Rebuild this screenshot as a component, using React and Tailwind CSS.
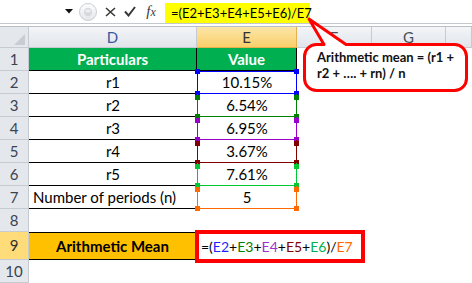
import React from 'react';

const rows = [
  { n: 2, label: 'r1', value: '10.15%', box: 'border-[#0000ff] border-t', handle: 'bg-[#0000ff]', first: true },
  { n: 3, label: 'r2', value: '6.54%', box: 'border-[#008000]', handle: 'bg-[#008000]' },
  { n: 4, label: 'r3', value: '6.95%', box: 'border-[#9900cc]', handle: 'bg-[#9900cc]' },
  { n: 5, label: 'r4', value: '3.67%', box: 'border-[#800000]', handle: 'bg-[#800000]' },
  { n: 6, label: 'r5', value: '7.61%', box: 'border-[#00c832]', handle: 'bg-[#00c832]' },
  { n: 7, label: 'Number of periods (n)', value: '5', box: 'border-[#ff6a00]', handle: 'bg-[#ff6a00]', left: true },
];

function RowHead({ n, active }) {
  return (
    <div
      className={`flex items-center justify-center border-b border-r border-[#c6cbd2] text-[15px] ${
        active ? 'bg-[#ffdc7a] text-[#2f2f2f]' : 'bg-[#e4e8ed] text-[#3b4252]'
      }`}
    >
      {n}
    </div>
  );
}

function ColHead({ label, active, blue }) {
  return (
    <div
      className={`flex items-center justify-center border-b border-r text-[15px] ${
        active
          ? 'bg-gradient-to-b from-[#fde6a6] to-[#f8cf6a] border-[#e2b24c] text-[#333]'
          : 'bg-gradient-to-b from-[#f3f5f8] to-[#e1e5ea] border-[#c6cbd2]'
      } ${blue ? 'text-[#3559a0]' : active ? '' : 'text-[#4a4f58]'}`}
    >
      {label}
    </div>
  );
}

function Formula() {
  return (
    <>
      <span>=(</span>
      <span className="text-[#1f1fff]">E2</span>+
      <span className="text-[#008000]">E3</span>+
      <span className="text-[#9933cc]">E4</span>+
      <span className="text-[#800000]">E5</span>+
      <span className="text-[#00b050]">E6</span>)/
      <span className="text-[#ff6a00]">E7</span>
    </>
  );
}

export default function App() {
  return (
    <div className="relative w-[472px] h-[283px] overflow-hidden bg-white font-[Lato,sans-serif] text-black">
      {/* formula bar */}
      <div className="flex h-[23px] bg-white">
        <div className="w-[78px] flex items-center justify-end pr-[5px]">
          <svg width="8" height="5" viewBox="0 0 8 5">
            <path d="M0 0 H8 L4 4.5 Z" fill="#111" />
          </svg>
        </div>
        <div className="w-[20px] flex items-center">
          <svg width="20" height="23" viewBox="0 0 20 23">
            <defs>
              <linearGradient id="g1" x1="0" y1="0" x2="0" y2="1">
                <stop offset="0" stopColor="#ffffff" />
                <stop offset="1" stopColor="#e3e6ea" />
              </linearGradient>
            </defs>
            <circle cx="10" cy="12" r="8.5" fill="url(#g1)" stroke="#c9cdd3" />
            <circle cx="10" cy="12" r="4.2" fill="#d5d8dd" />
            <ellipse cx="10" cy="10.8" rx="3" ry="1.6" fill="#eceef1" />
          </svg>
        </div>
        <div className="w-[2px]" />
        <div className="w-[20px] flex items-center justify-center">
          <svg width="11" height="10" viewBox="0 0 11 10">
            <path d="M1 1 L10 9 M10 1 L1 9" stroke="#3a3a3a" strokeWidth="1.6" />
          </svg>
        </div>
        <div className="w-[20px] flex items-center justify-center">
          <svg width="12" height="11" viewBox="0 0 12 11">
            <path d="M1 5.5 L4.5 9.5 L11 1" stroke="#3a3a3a" strokeWidth="2" fill="none" />
          </svg>
        </div>
        <div className="w-[22px] flex items-center justify-center font-['Liberation_Serif',serif] italic text-[15px] text-[#3a3a3a] leading-none">
          f<span className="text-[12px]">x</span>
        </div>
        <div className="flex-1 pl-[3px]">
          <div className="mt-[3px] h-[20px] w-[145px] bg-[#ffff00] pl-[6px] text-[13px] leading-[20px] whitespace-nowrap">
            =(E2+E3+E4+E5+E6)/E7
          </div>
        </div>
      </div>
      <div className="h-px bg-[#c3c8cf]" />
      <div className="h-[2px] bg-white" />
      <div className="h-px bg-[#b9bfc7]" />

      {/* sheet */}
      <div className="grid grid-cols-[29px_168px_100px_75px_74px_1fr] grid-rows-[21px_repeat(8,23px)_28px_23px]">
        <div className="relative bg-[#e4e8ed] border-b border-r border-[#c6cbd2]">
          <svg className="absolute right-[3px] bottom-[2px]" width="11" height="11" viewBox="0 0 11 11">
            <path d="M11 0 V11 H0 Z" fill="#c9cdd3" />
          </svg>
        </div>
        <ColHead label="D" blue />
        <ColHead label="E" active />
        <ColHead label="F" />
        <ColHead label="G" />
        <ColHead label="" />

        <RowHead n={1} />
        <div className="flex items-center justify-center bg-[#00b050] border-b border-r border-black text-white font-bold text-[15px]">
          Particulars
        </div>
        <div className="flex items-center justify-center bg-[#00b050] border-b border-r border-black text-white font-bold text-[15px]">
          Value
        </div>
        <div className="col-span-3" />

        {rows.map(r => (
          <React.Fragment key={r.n}>
            <RowHead n={r.n} />
            <div
              className={`flex items-center border-b border-black text-[15px] ${
                r.left ? 'justify-start pl-[4px]' : 'justify-center'
              }`}
            >
              {r.label}
            </div>
            <div className={`relative flex items-center justify-center border-x border-b text-[15px] ${r.box}`}>
              {r.value}
              <span className={`absolute left-[-3px] w-[5px] h-[5px] ${r.first ? 'top-[-3px]' : 'top-[1px]'} ${r.handle}`} />
              <span className={`absolute right-[-3px] w-[5px] h-[5px] ${r.first ? 'top-[-3px]' : 'top-[1px]'} ${r.handle}`} />
              <span className={`absolute left-[-3px] bottom-[-3px] w-[5px] h-[5px] ${r.handle}`} />
              <span className={`absolute right-[-3px] bottom-[-3px] w-[5px] h-[5px] ${r.handle}`} />
            </div>
            <div className="col-span-3" />
          </React.Fragment>
        ))}

        <RowHead n={8} />
        <div className="col-span-5" />

        <RowHead n={9} active />
        <div className="flex items-center justify-center bg-[#ffc000] border-y border-r border-black font-bold text-[15px]">
          Arithmetic Mean
        </div>
        <div className="relative">
          <div className="absolute left-[-2px] top-[-2px] w-[170px] h-[33px] border-4 border-[#ff0000] bg-white flex items-center pl-[2px] text-[14px] whitespace-nowrap">
            <Formula />
          </div>
        </div>
        <div className="col-span-3" />

        <RowHead n={10} />
        <div className="col-span-5" />
      </div>

      {/* callout */}
      <svg className="absolute left-0 top-0 pointer-events-none" width="472" height="283" viewBox="0 0 472 283">
        <path
          d="M316.5 44.5 L324 44.5 L309 19 L346 44.5 L454.5 44.5 A12 12 0 0 1 466.5 56.5 L466.5 78.5 A12 12 0 0 1 454.5 90.5 L316.5 90.5 A12 12 0 0 1 304.5 78.5 L304.5 56.5 A12 12 0 0 1 316.5 44.5 Z"
          fill="#ffffff"
          stroke="#ff0000"
          strokeWidth="3"
          strokeLinejoin="round"
        />
      </svg>
      <div className="absolute left-[317px] top-[49px] w-[145px] text-[13px] leading-[16px] font-bold text-[#111]">
        <div>Arithmetic mean = (r1 +</div>
        <div>r2 + …. + rn) / n</div>
      </div>
    </div>
  );
}
